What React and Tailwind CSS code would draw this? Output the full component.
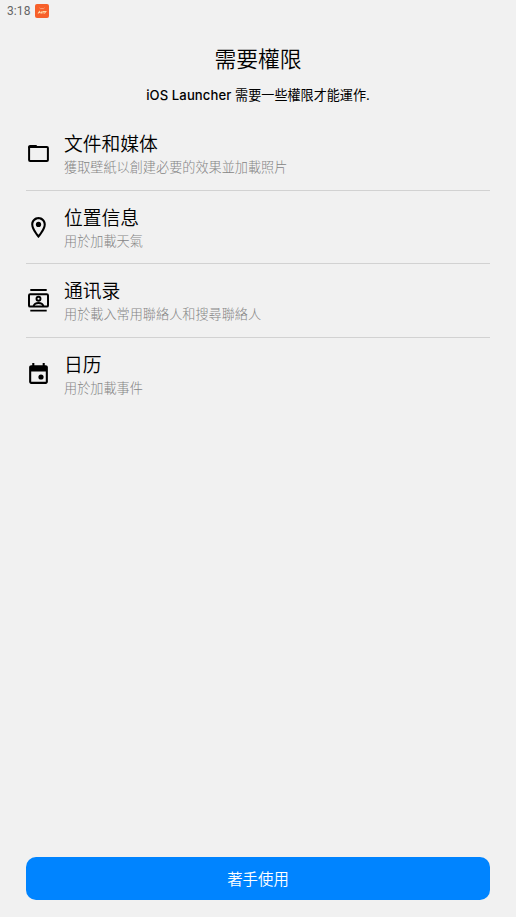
import React from "react";

const permissions = [
  {
    id: "files",
    title: "文件和媒体",
    description: "獲取壁紙以創建必要的效果並加載照片",
    icon: <FolderIcon />,
  },
  {
    id: "location",
    title: "位置信息",
    description: "用於加載天氣",
    icon: <PinIcon />,
  },
  {
    id: "contacts",
    title: "通讯录",
    description: "用於載入常用聯絡人和搜尋聯絡人",
    icon: <ContactsIcon />,
  },
  {
    id: "calendar",
    title: "日历",
    description: "用於加載事件",
    icon: <CalendarIcon />,
  },
];

function FolderIcon() {
  return (
    <svg viewBox="0 0 25 25" className="h-[25px] w-[25px]" fill="none">
      <rect x="3.1" y="6.1" width="18.8" height="13.8" rx="1" stroke="#000" strokeWidth="2" />
      <path d="M2.1 7V6c0-1.1.9-2 2-2h6.2l2.4 2.6V7.1z" fill="#000" />
    </svg>
  );
}

function PinIcon() {
  return (
    <svg viewBox="0 0 24 24" className="h-[25px] w-[25px]" fill="#000">
      <path d="M12 2C8.13 2 5 5.13 5 9c0 5.25 7 13 7 13s7-7.75 7-13c0-3.87-3.13-7-7-7zM7 9c0-2.76 2.24-5 5-5s5 2.24 5 5c0 2.88-2.88 7.19-5 9.88C9.92 16.21 7 11.85 7 9z" />
      <circle cx="12" cy="9" r="2.5" />
    </svg>
  );
}

function ContactsIcon() {
  return (
    <svg viewBox="0 0 25 25" className="h-[25px] w-[25px]" fill="none" stroke="#000">
      <path d="M4.3 2h16.4M4.3 22.6h16.4" strokeWidth="1.9" />
      <rect x="3" y="6.2" width="19" height="12.4" rx="1.2" strokeWidth="2" />
      <circle cx="12.5" cy="10.8" r="2" strokeWidth="1.9" />
      <path d="M7.6 18.2c.6-2.1 2.6-3.1 4.9-3.1s4.3 1 4.9 3.1" strokeWidth="2" />
    </svg>
  );
}

function CalendarIcon() {
  return (
    <svg viewBox="0 0 24 24" className="h-[25px] w-[25px]" fill="#000">
      <path d="M19 3h-1V1h-2v2H8V1H6v2H5c-1.1 0-2 .9-2 2v14c0 1.1.9 2 2 2h14c1.1 0 2-.9 2-2V5c0-1.1-.9-2-2-2zm0 16H5V9h14v10z" />
      <circle cx="14.4" cy="14.4" r="2.5" />
    </svg>
  );
}

function StatusBar() {
  return (
    <div className="flex h-[22px] items-center gap-[4px] pl-[7px] font-['Roboto',sans-serif] text-[12px] tracking-[0.1px] text-[#656565]">
      <span>3:18</span>
      <svg viewBox="0 0 14 14" className="h-[14px] w-[14px]" fill="none">
        <rect width="14" height="14" rx="2" fill="#f7602a" />
        <path d="M4.5 3.8l1 .8h3l1-.8" stroke="#fbb391" strokeWidth="0.8" />
        <path d="M3 9.5l1.5-2 1 1.8M6.5 7.5v2M8 9.5v-2h2.8l-1.5 2" stroke="#ffd9a8" strokeWidth="1.1" />
      </svg>
    </div>
  );
}

export default function App() {
  return (
    <div className="flex h-[917px] w-[516px] flex-col overflow-hidden bg-[#f1f1f1] font-['Noto_Sans_CJK_SC',sans-serif] text-black">
      <StatusBar />

      {/* Header */}
      <header className="flex flex-col items-center pt-[20px] text-center">
        <h1 className="text-[21.8px] leading-[32px] font-[350]">需要權限</h1>
        <p className="mt-[11px] font-['Inter','Noto_Sans_CJK_SC',sans-serif] text-[13.1px] leading-[20px]">
          <span className="font-[450] tracking-[0.1px]">iOS Launcher</span> 需要一些權限才能運作.
        </p>
      </header>

      {/* Permissions */}
      <ul className="mx-[26px] mt-[12.6px]">
        {permissions.map((item) => (
          <li
            key={item.id}
            className="flex h-[73.4px] items-center border-b border-[#d2d2d2] last:border-b-0"
          >
            <div className="flex w-[38px] shrink-0">{item.icon}</div>
            <div className="flex flex-col pb-[1.8px]">
              <span className="text-[18.8px] leading-[28px] font-[350]">{item.title}</span>
              <span className="text-[13.15px] leading-[19px] font-light text-[#858585]">{item.description}</span>
            </div>
          </li>
        ))}
      </ul>

      <button className="mx-[26px] mt-auto mb-[17px] h-[43px] rounded-[10px] bg-[#0084ff] text-[15.4px] font-[350] text-white">
        著手使用
      </button>
    </div>
  );
}
